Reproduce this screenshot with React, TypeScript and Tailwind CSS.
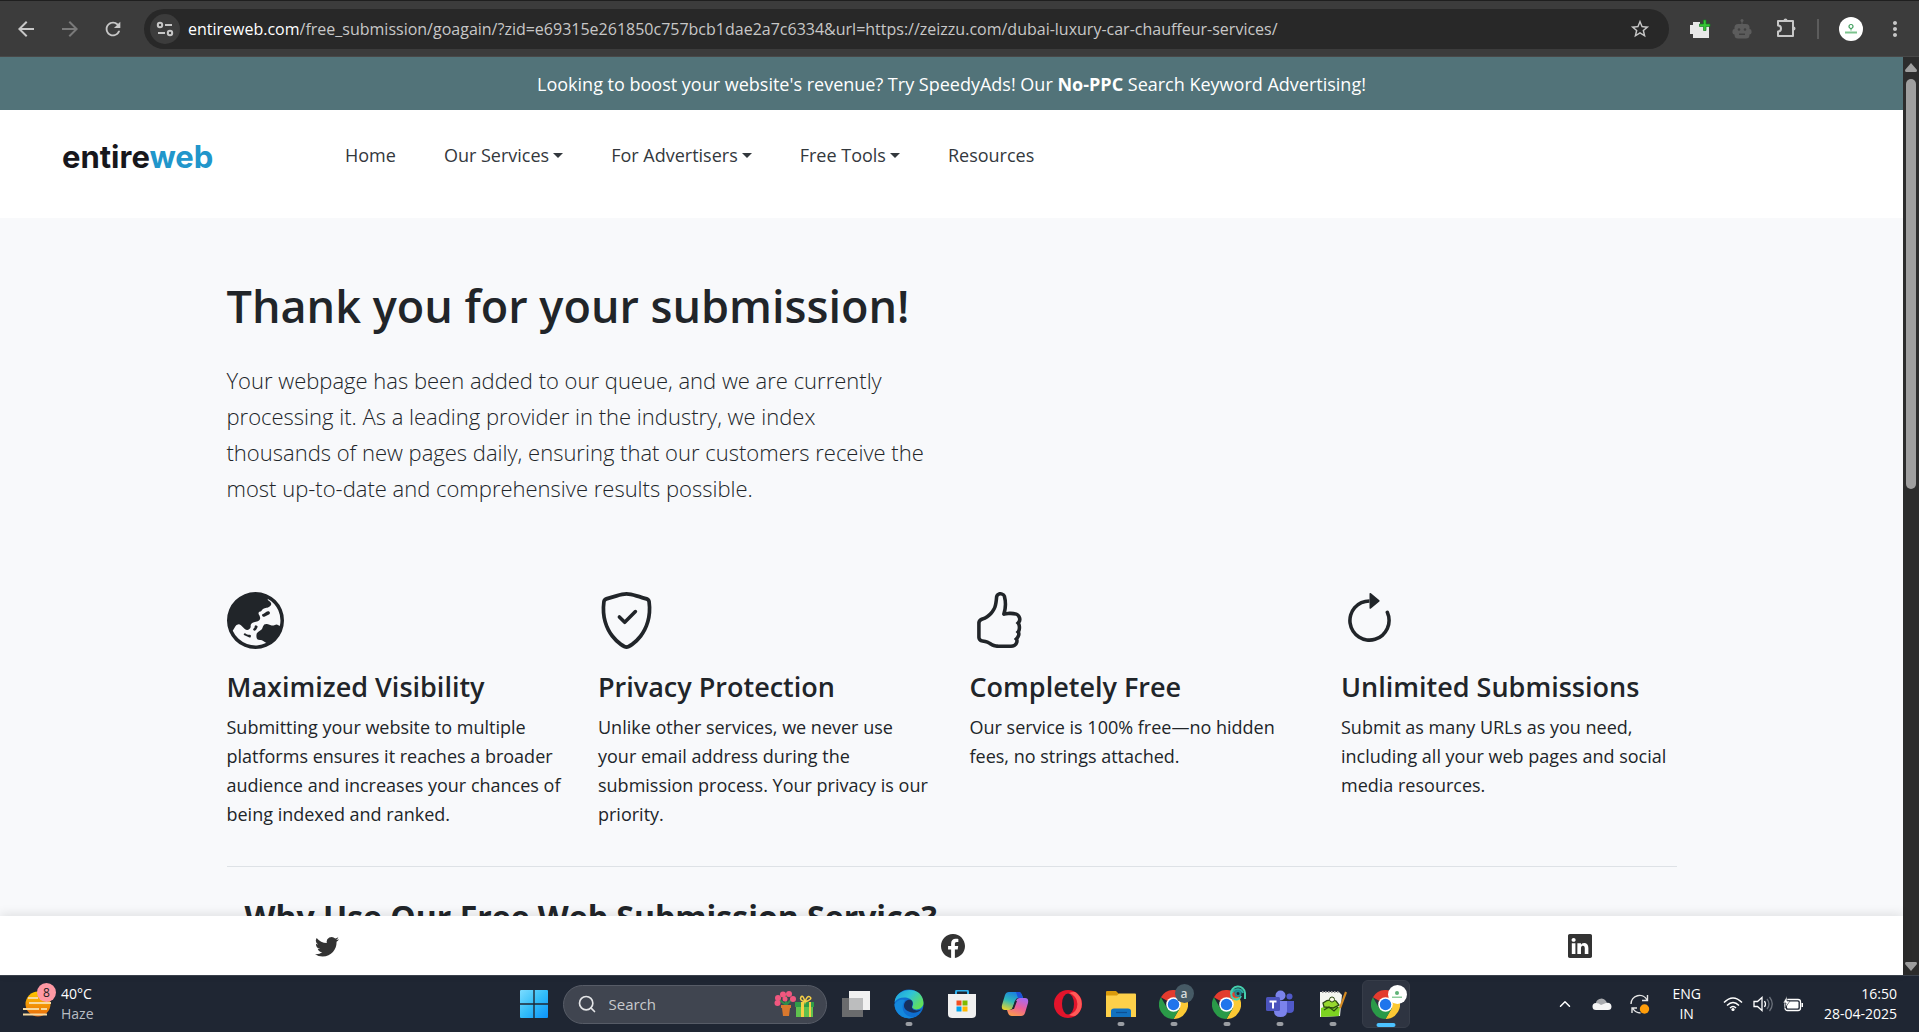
import type { ReactNode } from "react";
import {
  BsArrowClockwise,
  BsFacebook,
  BsGlobeAsiaAustralia,
  BsHandThumbsUp,
  BsLinkedin,
  BsShieldCheck,
  BsTwitter,
} from "react-icons/bs";
import { MdArrowBack, MdArrowForward, MdMoreVert, MdRefresh, MdStarBorder } from "react-icons/md";
import { ChevronUp, Search } from "lucide-react";

const navItems = [
  { label: "Home", menu: false },
  { label: "Our Services", menu: true },
  { label: "For Advertisers", menu: true },
  { label: "Free Tools", menu: true },
  { label: "Resources", menu: false },
];

const features = [
  {
    icon: <BsGlobeAsiaAustralia />,
    title: "Maximized Visibility",
    text: "Submitting your website to multiple platforms ensures it reaches a broader audience and increases your chances of being indexed and ranked.",
  },
  {
    icon: <BsShieldCheck />,
    title: "Privacy Protection",
    text: "Unlike other services, we never use your email address during the submission process. Your privacy is our priority.",
  },
  {
    icon: <BsHandThumbsUp />,
    title: "Completely Free",
    text: "Our service is 100% free—no hidden fees, no strings attached.",
  },
  {
    icon: <BsArrowClockwise />,
    title: "Unlimited Submissions",
    text: "Submit as many URLs as you need, including all your web pages and social media resources.",
  },
];

function BrowserBar() {
  return (
    <div className="flex h-[57px] shrink-0 items-center border-t border-b border-t-[#1f1f1f] border-b-[#484848] bg-[#3c3c3c] pr-3 pl-3.5 text-[#c7c7c7]">
      <button aria-label="Back" className="mr-5">
        <MdArrowBack size={24} />
      </button>
      <button aria-label="Forward" className="mr-5 text-[#7a7a7a]">
        <MdArrowForward size={24} />
      </button>
      <button aria-label="Reload" className="mr-5">
        <MdRefresh size={22} />
      </button>
      <div className="flex h-10 min-w-0 flex-1 items-center rounded-full bg-[#282828] pr-[18px] pl-1.5">
        <button aria-label="Site information" className="mr-2 flex size-[30px] shrink-0 items-center justify-center rounded-full bg-[#3c3c3c]">
          <svg width="18" height="18" viewBox="0 0 18 18" fill="none" stroke="currentColor" strokeWidth="2">
            <circle cx="4" cy="5" r="2.2" />
            <path d="M9 5h7M2 13h7" />
            <circle cx="14" cy="13" r="2.2" />
          </svg>
        </button>
        <label htmlFor="url" className="text-base text-white">
          entireweb.com
        </label>
        <input
          id="url"
          className="min-w-0 flex-1 bg-transparent text-base text-[#c7c7c7] outline-none"
          defaultValue="/free_submission/goagain/?zid=e69315e261850c757bcb1dae2a7c6334&url=https://zeizzu.com/dubai-luxury-car-chauffeur-services/"
        />
        <button aria-label="Bookmark this tab">
          <MdStarBorder size={22} />
        </button>
      </div>
      <div className="ml-5 flex items-center gap-5">
        <button aria-label="Add page">
          <svg width="22" height="22" viewBox="0 0 22 22">
            <path d="M4 4h7v3h9v13H4v-4H1v-9h3z" fill="#e8e8e8" />
            <path d="M14.500 2h2.500v4h4v2.500h-4v4h-2.500v-4h-4V6h4z" fill="#35c435" stroke="#15801f" strokeWidth=".7" />
          </svg>
        </button>
        <button aria-label="Robot extension">
          <svg width="22" height="22" viewBox="0 0 22 22" fill="#5c5c5c">
            <circle cx="11" cy="2.5" r="1.5" />
            <path d="M10.500 3h1v4h-1z" />
            <rect x="3.500" y="6" width="15" height="14.500" rx="3.500" />
            <rect x="1.500" y="11" width="19" height="5.500" rx="2" />
            <circle cx="8" cy="11.500" r="1.300" fill="#404040" />
            <circle cx="14" cy="11.500" r="1.300" fill="#404040" />
            <path d="M8 15.500h6V17H8z" fill="#404040" />
          </svg>
        </button>
        <button aria-label="Extensions">
          <svg width="24" height="24" viewBox="0 0 24 24" fill="none" stroke="currentColor" strokeWidth="2">
            <path d="M5 4h15v15H5v-4.500q3 0 3-3t-3-3z" strokeLinejoin="round" />
            <path d="M10.500 3.500a2 2 0 0 1 4 0zM20.500 9.500a2 2 0 0 1 0 4z" fill="currentColor" stroke="none" />
          </svg>
        </button>
      </div>
      <div className="mx-5 h-5 w-0.5 bg-[#5c5c5c]" />
      <button aria-label="Profile" className="flex size-6 items-center justify-center rounded-full bg-white">
        <svg width="16" height="14" viewBox="0 0 16 14">
          <circle cx="8" cy="4.500" r="2" fill="none" stroke="#3f9f5c" strokeWidth="1.200" />
          <path d="M8 6v2.500" stroke="#3f9f5c" />
          <path d="M2 9.500h12v2H2z" fill="#7cc48e" />
        </svg>
      </button>
      <button aria-label="Menu" className="ml-5">
        <MdMoreVert size={24} />
      </button>
    </div>
  );
}

function Header() {
  return (
    <header className="flex h-[108px] items-start bg-white pl-[62px]">
      <a href="#" className="mt-6 w-[283px] font-['Inter',sans-serif] text-[31px] leading-[46px] font-bold text-[#17171c]">
        entire<span className="text-[#2196cb]">web</span>
      </a>
      <nav className="mt-[31px] flex gap-12 text-[18px] leading-7 text-[#33383d]">
        {navItems.map((item) =>
          item.menu ? (
            <button key={item.label} className="flex items-center gap-1">
              {item.label}
              <svg width="10" height="5" viewBox="0 0 10 5" fill="currentColor">
                <path d="M0 0h10L5 5z" />
              </svg>
            </button>
          ) : (
            <a key={item.label} href="#">
              {item.label}
            </a>
          )
        )}
      </nav>
    </header>
  );
}

function Scrollbar() {
  return (
    <div className="flex w-4 shrink-0 flex-col items-center bg-[#2c2c2c] pt-1.5 pb-1">
      <svg width="12" height="9" viewBox="0 0 12 9" fill="#9f9f9f">
        <path d="M6 0l6 7q0 2-1 2H1Q0 9 0 7z" />
      </svg>
      <div className="mt-[7px] h-[410px] w-2.5 rounded-full bg-[#9f9f9f]" />
      <svg className="mt-auto" width="12" height="9" viewBox="0 0 12 9" fill="#9f9f9f">
        <path d="M6 9L0 2q0-2 1-2h10q1 0 1 2z" />
      </svg>
    </div>
  );
}

function ChromeIcon() {
  return (
    <svg width="29" height="29" viewBox="0 0 48 48">
      <path d="M24 24L3.200 12A24 24 0 0 1 44.800 12z" fill="#e33b2e" />
      <path d="M44.800 12A24 24 0 0 1 24 48l10.400-18L34 14 24 12z" fill="#fcc934" />
      <path d="M3.200 12A24 24 0 0 0 24 48l10.400-18H24L13.600 30z" fill="#2a9a48" />
      <path d="M24 12h20.800L40 14 24 14z" fill="#e33b2e" />
      <circle cx="24" cy="24" r="12" fill="#fff" />
      <circle cx="24" cy="24" r="9.500" fill="#1f75ec" />
    </svg>
  );
}

function TaskButton({ label, open, active, children }: { label: string; open?: boolean; active?: boolean; children: ReactNode }) {
  return (
    <button
      aria-label={label}
      className={
        active
          ? "relative flex size-12 items-center justify-center rounded-md border border-[#373d49] bg-[#2e3441]"
          : "relative flex size-12 items-center justify-center"
      }
    >
      {children}
      {open && <span className="absolute bottom-0.5 left-1/2 h-1 w-[7px] -translate-x-1/2 rounded-full bg-[#9a9da3]" />}
      {active && <span className="absolute bottom-0 left-1/2 h-1 w-[19px] -translate-x-1/2 rounded-full bg-[#4cc2ff]" />}
    </button>
  );
}

function Weather() {
  return (
    <button className="flex items-center gap-2 justify-self-start pl-[23px] text-left text-[14px] leading-5">
      <span className="relative">
        <svg width="30" height="30" viewBox="0 0 30 30">
          <defs>
            <linearGradient id="sun" x1="0" y1="0" x2="0" y2="1">
              <stop offset="0" stopColor="#ffc800" />
              <stop offset="1" stopColor="#e8680c" />
            </linearGradient>
          </defs>
          <circle cx="15" cy="15" r="12.500" fill="url(#sun)" />
          <g stroke="#f7d9a0" strokeWidth="2">
            <path d="M5 9h10M6 14h22M0 20h16M18 20h6M0 25.500h24" />
          </g>
        </svg>
        <span className="absolute -top-1.5 left-3.5 flex size-[19px] items-center justify-center rounded-full bg-[#ff99a4] text-xs text-[#1c1c1c]">
          8
        </span>
      </span>
      <span>
        <span className="block text-white">40°C</span>
        <span className="block text-[#b9bdc3]">Haze</span>
      </span>
    </button>
  );
}

function Taskbar() {
  return (
    <div className="grid h-[57px] shrink-0 grid-cols-[1fr_auto_1fr] items-center border-t border-[#3c434e] bg-[#1f2633] text-white">
      <Weather />
      <div className="flex items-center gap-[5px]">
        <TaskButton label="Start">
          <svg width="28" height="28" viewBox="0 0 28 28">
            <defs>
              <linearGradient id="win" x1="0" y1="0" x2="1" y2="1">
                <stop offset="0" stopColor="#7bdcff" />
                <stop offset=".5" stopColor="#33bdf8" />
                <stop offset="1" stopColor="#0b93fb" />
              </linearGradient>
            </defs>
            <path d="M1 0h12.300v13.300H0V1a1 1 0 0 1 1-1zM14.700 0H27a1 1 0 0 1 1 1v12.300H14.700zM0 14.700h13.300V28H1a1 1 0 0 1-1-1zM14.700 14.700H28V27a1 1 0 0 1-1 1H14.700z" fill="url(#win)" />
          </svg>
        </TaskButton>
        <div className="flex h-[39px] w-[264px] items-center rounded-full border border-[#575c67] bg-[#404550] pr-3 pl-[13px]">
          <Search size={20} strokeWidth={2} className="mr-3 shrink-0 text-[#e4e5e7]" />
          <input aria-label="Search" placeholder="Search" className="min-w-0 flex-1 bg-transparent text-[15px] outline-none placeholder:text-[#c8cacd]" />
          <svg width="40" height="28" viewBox="0 0 40 28">
            <path d="M12 15V6M12 15L4 9M12 15l7-7" stroke="#2f8f4a" strokeWidth="2" />
            <g fill="#f0577f">
              <circle cx="9" cy="4.500" r="3" />
              <circle cx="15" cy="4" r="3" />
              <circle cx="4" cy="8" r="3" />
              <circle cx="3.500" cy="13" r="3" />
              <circle cx="19" cy="9" r="3" />
              <circle cx="11" cy="9" r="2.500" />
            </g>
            <path d="M7 15h10v3h-1l-1 8H9l-1-8H7z" fill="#d9782d" />
            <path d="M21 12h19v5h-1v10H22V17h-1z" fill="#5fc14e" />
            <path d="M21 12h19v5H21z" fill="#2f9c48" />
            <path d="M27 12h3v15h-3zM35 12h2v15h-2z" fill="#f6cf46" />
            <path d="M31 12q-6-2-4-5t4 5q2-7 5-5t-5 5" stroke="#f6cf46" strokeWidth="1.500" fill="none" />
          </svg>
        </div>
        <TaskButton label="Task view">
          <svg width="28" height="28" viewBox="0 0 28 28">
            <path d="M0 8h21v19H0z" fill="#6a6b6d" />
            <path d="M7 1h21v19H7z" fill="#f1f1f1" />
            <path d="M7 8h14v12H7z" fill="#bcbdbe" />
          </svg>
        </TaskButton>
        <TaskButton label="Edge" open>
          <svg width="30" height="30" viewBox="0 0 30 30">
            <defs>
              <linearGradient id="edgeTop" x1="0" y1="0" x2="1" y2=".6">
                <stop offset="0" stopColor="#1c9be0" />
                <stop offset=".5" stopColor="#2fc4d8" />
                <stop offset="1" stopColor="#62e05a" />
              </linearGradient>
            </defs>
            <circle cx="15" cy="15" r="14.500" fill="#0f6fd0" />
            <path d="M.6 13C2-2 29-4 29.500 14c0 6-8 8-11 5-1-1.500 1-2 .5-5C17 7 5 7 .6 13z" fill="url(#edgeTop)" />
            <path d="M10 17c0-4 3-7 7-6 2 1 2 4 1 6-1 4 5 6 10 3-3 3-8 5-12 3-3-1-6-3-6-6z" fill="#17305c" />
            <path d="M9 15c-2 7 3 13 11 13.500-9 3-19-3-19.500-13Q5 9 11 11z" fill="#1488dc" />
          </svg>
        </TaskButton>
        <TaskButton label="Microsoft Store">
          <svg width="28" height="28" viewBox="0 0 28 28">
            <path d="M8 5V2q0-1.500 1.500-1.500h9Q20 .5 20 2v3" fill="none" stroke="#2fb1ee" strokeWidth="2" />
            <path d="M0 4h28v20q0 4-4 4H4q-4 0-4-4z" fill="#f0f0f0" />
            <path d="M8.500 10.500h5v5h-5z" fill="#f25022" />
            <path d="M14.500 10.500h5v5h-5z" fill="#7fba00" />
            <path d="M8.500 16.500h5v5h-5z" fill="#00a4ef" />
            <path d="M14.500 16.500h5v5h-5z" fill="#ffb900" />
          </svg>
        </TaskButton>
        <TaskButton label="Copilot">
          <svg width="28" height="26" viewBox="0 0 28 26">
            <defs>
              <linearGradient id="cpA" x1=".6" y1="0" x2=".2" y2="1">
                <stop offset="0" stopColor="#1a7fe0" />
                <stop offset=".5" stopColor="#2fb8b8" />
                <stop offset="1" stopColor="#e9d32c" />
              </linearGradient>
              <linearGradient id="cpB" x1=".7" y1="0" x2=".3" y2="1">
                <stop offset="0" stopColor="#a96af0" />
                <stop offset=".5" stopColor="#ec5f9a" />
                <stop offset="1" stopColor="#fb9a4d" />
              </linearGradient>
            </defs>
            <path d="M8 1h10q2 0 3 3l1 3h-5q-2 0-3 3l-2 6q-1 3-4 3H4q-4 0-3-5L4 4q1-3 4-3z" fill="url(#cpA)" />
            <path d="M15 1h3q2 0 3 3l1 3h-5z" fill="#1d52d8" />
            <path d="M20 25H11q-3 0-4-3l-1-3h3q3 0 4-3l2-6q1-3 4-3h5q4 0 3 5l-3 10q-1 3-4 3z" fill="url(#cpB)" />
            <path d="M14 10h2l-3 8h-2z" fill="#1f2633" />
          </svg>
        </TaskButton>
        <TaskButton label="Opera">
          <svg width="28" height="28" viewBox="0 0 28 28">
            <circle cx="14" cy="14" r="14" fill="#e3142b" />
            <path d="M15 3a14 12 0 0 1 0 22 13 14 0 0 0 6 1 14 14 0 0 0 0-24 13 14 0 0 0-6 1z" fill="#ff5a58" />
            <ellipse cx="14" cy="14" rx="6" ry="10.500" fill="#1f2633" />
          </svg>
        </TaskButton>
        <TaskButton label="File Explorer" open>
          <svg width="30" height="28" viewBox="0 0 30 28">
            <path d="M0 2q0-1 1-1h9l3 3v6H0z" fill="#d99a0b" />
            <path d="M0 5.500h11l2-2h16q1 0 1 1V27H0z" fill="#fdd04a" />
            <path d="M5 27v-6q0-2.500 3-2.500h14q3 0 3 2.500v6z" fill="#1271bf" />
            <path d="M10 22.500h11" stroke="#0d4f92" strokeWidth="1.200" />
          </svg>
        </TaskButton>
        <TaskButton label="Chrome, profile a" open>
          <ChromeIcon />
          <span className="absolute top-1 right-1 flex size-[19px] items-center justify-center rounded-full bg-[#465a65] text-xs font-semibold text-[#d5dadd]">a</span>
        </TaskButton>
        <TaskButton label="Chrome, second profile" open>
          <ChromeIcon />
          <svg className="absolute top-1 right-1" width="18" height="18" viewBox="0 0 18 18" fill="none" stroke="#45d0ae" strokeWidth="2">
            <path d="M2 10a7 7 0 0 1 14-1v6M5 6a5 5 0 1 0 7 6" />
            <path d="M4 8a5.500 5.500 0 0 1 10 1" stroke="#2aa9a0" />
            <circle cx="9" cy="9.500" r="2.500" stroke="#218c94" />
          </svg>
        </TaskButton>
        <TaskButton label="Teams" open>
          <svg width="30" height="28" viewBox="0 0 30 28">
            <circle cx="24.500" cy="6.500" r="3" fill="#5059c9" />
            <circle cx="15.500" cy="5.500" r="5" fill="#7b83eb" />
            <path d="M20 11h9v8q0 4-4.500 4T20 19z" fill="#5059c9" />
            <path d="M9 11h13v10q0 6-6.500 6T9 21z" fill="#7b83eb" />
            <rect x="1" y="7" width="14" height="14" rx="1.500" fill="#4b53bc" />
            <path d="M4.500 10.500h7v2H9v6H7v-6H4.500z" fill="#fff" />
          </svg>
        </TaskButton>
        <TaskButton label="Notepad++" open>
          <svg width="28" height="28" viewBox="0 0 28 28">
            <path d="M1 2h19l3 3-2 21-20 1z" fill="#f3f5ee" />
            <path d="M2 18q9-4 19-1l-1 9-18 1z" fill="#7dd321" />
            <path d="M4 13q6-5 13-2l3 4-6 3-9-1z" fill="#97d82f" stroke="#2c4a12" strokeWidth="1.300" />
            <path d="M5 20l5-3 5 4 4-4" fill="none" stroke="#2c4a12" strokeWidth="1.200" />
            <circle cx="13" cy="9.500" r="2.500" fill="#f6f7e0" stroke="#2c4a12" />
            <path d="M3 2h17" stroke="#9a9a9a" strokeWidth="2" strokeDasharray="1.500 1.500" />
            <path d="M27 2l-6 16" stroke="#d58b24" strokeWidth="2.200" />
          </svg>
        </TaskButton>
        <TaskButton label="Chrome, current window" active>
          <ChromeIcon />
          <span className="absolute top-1 right-0.5 flex size-[19px] items-center justify-center rounded-full bg-white">
            <svg width="14" height="12" viewBox="0 0 14 12">
              <circle cx="7" cy="4" r="2" fill="#5eb277" />
              <path d="M2 7.500h10v1.500H2z" fill="#8ccc9c" />
            </svg>
          </span>
        </TaskButton>
      </div>
      <div className="flex items-center justify-self-end pr-[22px] text-[14px] leading-5">
        <button aria-label="Show hidden icons" className="mr-[18px]">
          <ChevronUp size={18} />
        </button>
        <svg className="mr-[18px]" width="20" height="14" viewBox="0 0 20 14">
          <path d="M4 8a5.500 5.500 0 0 1 10-4l2 4z" fill="#a9abaf" />
          <path d="M4 13a3.500 3.500 0 0 1 0-7q3 0 5 2l5-2q5-1 5.500 3.500 0 3.500-3.500 3.500z" fill="#f5f5f5" />
        </svg>
        <svg className="mr-[22px]" width="20" height="20" viewBox="0 0 20 20" fill="none" stroke="#e6e6e6" strokeWidth="1.400">
          <path d="M1 10a8.500 8.500 0 0 1 16-4M17.500 1v5.500H12M2 19v-5h5M2.500 14q3 5 8 5" />
          <circle cx="14.500" cy="15" r="4.700" fill="#ff9d0a" stroke="none" />
        </svg>
        <button className="mr-[22px] text-center">
          <span className="block">ENG</span>
          <span className="block">IN</span>
        </button>
        <button aria-label="Network, volume and battery" className="mr-5 flex items-center gap-2.5">
          <svg width="20" height="16" viewBox="0 0 20 16" fill="none" stroke="#fff" strokeWidth="1.500">
            <path d="M1 6.500q9-9 18 0M4 9.500q6-6 12 0M7 12q3-3 6 0" />
            <circle cx="10" cy="13.500" r="1.600" fill="#fff" stroke="none" />
          </svg>
          <svg width="20" height="16" viewBox="0 0 20 16" fill="none" stroke="#fff" strokeWidth="1.300">
            <path d="M1 5.500h3.500L9 1.500v13l-4.500-4H1zM11.500 5q2 3 0 6" />
            <path d="M14 3q4 5 0 10M16.500 1q5.500 7 0 14" stroke="#6b717b" />
          </svg>
          <svg width="21" height="16" viewBox="0 0 21 16">
            <rect x="2" y="3.500" width="15.500" height="11" rx="2.500" fill="none" stroke="#fff" strokeWidth="1.300" />
            <rect x="4" y="5.500" width="11.500" height="7" rx="1" fill="#fff" />
            <path d="M18.500 7h1.500v4h-1.500z" fill="#fff" />
            <path d="M4 0L0 7h3l-1 5 5-7H4z" fill="#fff" stroke="#1f2633" strokeWidth=".6" />
          </svg>
        </button>
        <button className="text-right">
          <span className="block">16:50</span>
          <span className="block">28-04-2025</span>
        </button>
      </div>
    </div>
  );
}

export default function App() {
  return (
    <div className="flex h-screen flex-col overflow-hidden font-['Open_Sans','Noto_Sans',sans-serif]">
      <BrowserBar />
      <div className="flex min-h-0 flex-1">
        <div className="flex min-w-0 flex-1 flex-col bg-[#f8f9fb] text-[#212529]">
          <div className="min-h-0 flex-1 overflow-hidden">
            <div className="bg-[#527379] pt-[13px] pb-[11px] text-center text-[18px] leading-[29px] text-white">
              Looking to boost your website's revenue? Try SpeedyAds! Our <strong>No-PPC</strong> Search Keyword Advertising!
            </div>
            <Header />
            <main className="mx-auto w-[1450px] max-w-full pt-[59px]">
              <h1 className="text-[45px] leading-[58px] font-semibold">Thank you for your submission!</h1>
              <p className="mt-[27px] max-w-[720px] text-[22px] leading-9 font-light">
                Your webpage has been added to our queue, and we are currently processing it. As a leading provider in the
                industry, we index
                <br />
                thousands of new pages daily, ensuring that our customers receive the most up-to-date and comprehensive
                results possible.
              </p>
              <div className="mt-[86px] grid grid-cols-4 gap-9">
                {features.map((feature) => (
                  <section key={feature.title}>
                    <div className="text-[57px]">{feature.icon}</div>
                    <h2 className="mt-[21px] text-[27px] leading-[34px] font-semibold">{feature.title}</h2>
                    <p className="mt-[9px] text-[18px] leading-[29px]">{feature.text}</p>
                  </section>
                ))}
              </div>
              <hr className="mt-[37px] border-[#dee2e6]" />
              <h2 className="mt-[30px] pl-[18px] text-[32px] leading-10 font-bold">Why Use Our Free Web Submission Service?</h2>
            </main>
          </div>
          <footer className="z-10 flex h-[59px] shrink-0 items-center justify-around bg-white pr-2.5 pl-3.5 text-[24px] text-[#333] shadow-[0_-2px_10px_rgba(0,0,0,0.1)]">
            <a href="#" aria-label="Twitter">
              <BsTwitter />
            </a>
            <a href="#" aria-label="Facebook">
              <BsFacebook />
            </a>
            <a href="#" aria-label="LinkedIn">
              <BsLinkedin />
            </a>
          </footer>
        </div>
        <Scrollbar />
      </div>
      <Taskbar />
    </div>
  );
}
